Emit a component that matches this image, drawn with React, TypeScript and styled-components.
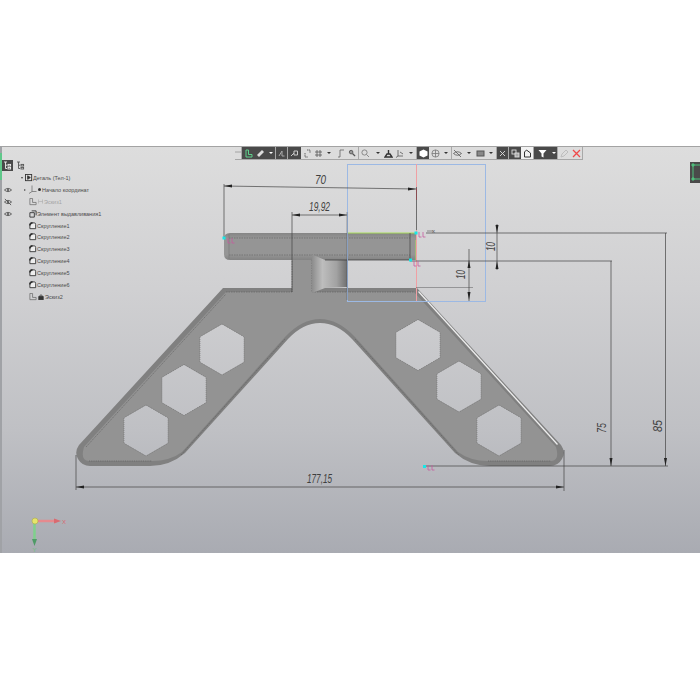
import React from "react";
import styled, { createGlobalStyle } from "styled-components";

const GlobalStyle = createGlobalStyle`
  html, body { margin: 0; padding: 0; background: #fff; }
  body { font-family: "Liberation Sans", "Noto Sans", sans-serif; }
`;

const Page = styled.div`
  width: 700px;
  height: 700px;
  padding-top: 146px;
  box-sizing: border-box;
  background: #fff;
  overflow: hidden;
`;
const Viewport = styled.div`
  position: relative;
  height: 407px;
  box-sizing: border-box;
  border-top: 1px solid #a3a3a3;
  border-left: 2px solid #a0a2a6;
  background: linear-gradient(180deg, #dddddd 0%, #d0d0d2 35%, #bfc0c4 70%, #a9abb2 100%);
`;
const GreenStrip = styled.div`
  position: absolute;
  left: -2px;
  top: 6px;
  width: 2px;
  height: 27px;
  background: #5fc88a;
`;
const Canvas = styled.svg`
  display: block;
  width: 698px;
  height: 406px;
`;

/* top toolbar */
const Toolbar = styled.div`
  position: absolute;
  left: 233px;
  top: 0;
  height: 12px;
  display: flex;
  align-items: stretch;
  background: #dcdcdc;
  border-bottom: 1px solid #a6a6a6;
`;
const Btn = styled.div<{ $w: number; $dark?: boolean; $white?: boolean; $sep?: boolean }>`
  width: ${(p) => p.$w}px;
  display: flex;
  align-items: center;
  justify-content: center;
  flex: none;
  background: ${(p) => (p.$dark ? "#4a4a4a" : p.$white ? "#f2f2f2" : "transparent")};
  border-right: ${(p) => (p.$sep ? "1px solid #a8a8a8" : "none")};
  box-sizing: border-box;
  color: ${(p) => (p.$dark ? "#e8e8e8" : "#555")};
`;
const Caret = styled.span<{ $light?: boolean }>`
  width: 0;
  height: 0;
  border-left: 2px solid transparent;
  border-right: 2px solid transparent;
  border-top: 2px solid ${(p) => (p.$light ? "#fff" : "#333")};
`;

/* model tree */
const Tree = styled.div`
  position: absolute;
  left: -2px;
  top: 13px;
  width: 120px;
  color: #4c4c4c;
`;
const TreeHead = styled.div`
  display: flex;
  gap: 2px;
  padding-left: 2px;
  height: 11px;
  margin-bottom: 1px;
`;
const HeadBtn = styled.div<{ $on?: boolean }>`
  width: 11px;
  height: 11px;
  display: flex;
  align-items: center;
  justify-content: center;
  background: ${(p) => (p.$on ? "#4a4a4a" : "transparent")};
  color: ${(p) => (p.$on ? "#eee" : "#555")};
`;
const Row = styled.div<{ $faded?: boolean }>`
  display: flex;
  align-items: center;
  height: 11.9px;
  font-size: 5.5px;
  white-space: nowrap;
  color: ${(p) => (p.$faded ? "#a4a4a4" : "#4c4c4c")};
`;
const EyeSlot = styled.div`
  width: 17px;
  padding-left: 4px;
  box-sizing: border-box;
  display: flex;
  align-items: center;
  flex: none;
`;
const Twist = styled.div<{ $w: number }>`
  width: ${(p) => p.$w}px;
  display: flex;
  justify-content: flex-end;
  padding-right: 2px;
  box-sizing: border-box;
  flex: none;
`;
const TwistDown = styled.span`
  width: 0;
  height: 0;
  border-left: 1.5px solid transparent;
  border-right: 1.5px solid transparent;
  border-top: 2.5px solid #444;
`;
const TwistRight = styled.span`
  width: 0;
  height: 0;
  border-top: 1.5px solid transparent;
  border-bottom: 1.5px solid transparent;
  border-left: 2.5px solid #555;
`;
const Badge = styled.span`
  display: flex;
  align-items: center;
  margin: 0 1px 0 1px;
`;
const Corner = styled.div`
  position: absolute;
  right: 0;
  top: 15px;
  width: 10px;
  height: 21px;
  background: #4a4a4a;
  overflow: hidden;
`;

type G = React.SVGProps<SVGSVGElement>;
const I = ({ children, s = 9, ...r }: G & { s?: number }) => (
  <svg width={s} height={s} viewBox="0 0 9 9" fill="none" stroke="currentColor" strokeWidth="1" {...r}>
    {children}
  </svg>
);

const Eye = ({ off }: { off?: boolean }) => (
  <I s={8} stroke="#555">
    <path d="M.5 4.5Q4.5 .8 8.5 4.5Q4.5 8.2 .5 4.5Z" />
    <circle cx="4.5" cy="4.5" r="1.2" fill="#555" stroke="none" />
    {off && <path d="M1 1L8 8" />}
  </I>
);
const SketchIcon = () => (
  <I s={8} stroke="#666" strokeWidth=".8">
    <path d="M1 .5V7.5H8V5H4V.5Z" />
  </I>
);
const FilletIcon = () => (
  <I s={8} stroke="#333" strokeWidth="1">
    <path d="M1 7.5V3Q1 1 3.5 1H6Q7.5 1 7.5 3V7.5Z" fill="#eee" />
    <path d="M1 4Q1 1 4 1" strokeWidth="1.8" />
  </I>
);
const ExtrudeIcon = () => (
  <I s={8} stroke="#333" strokeWidth="1">
    <path d="M3 1H8V6M1 3H6V8H1Z" />
  </I>
);
const PartIcon = () => (
  <I s={8} stroke="#333" strokeWidth="1">
    <rect x=".5" y=".5" width="7" height="7" fill="#ddd" />
    <path d="M3 2V6L6 4Z" fill="#333" />
  </I>
);
const AxesIcon = () => (
  <I s={9} stroke="#666" strokeWidth=".7">
    <path d="M4 .5V6.5H8.5M4 6.5L1 8.5" />
  </I>
);
const LockIcon = () => (
  <I s={6} viewBox="0 0 6 6" stroke="#333" strokeWidth=".8">
    <rect x=".8" y="2.6" width="4.4" height="3" fill="#333" />
    <path d="M1.8 2.6V1.6Q3 0 4.2 1.6V2.6" />
  </I>
);
const Dot = styled.span`
  width: 3px;
  height: 3px;
  border-radius: 50%;
  background: #333;
`;
const TreeIcon = () => (
  <I s={9} strokeWidth=".9">
    <path d="M1 1H4M2.5 1V7.5H4M2.5 4.2H4" />
    <rect x="5" y="3.4" width="2.6" height="1.6" />
    <rect x="5" y="6.4" width="2.6" height="1.6" />
  </I>
);

const tools: { w: number; dark?: boolean; white?: boolean; sep?: boolean; icon?: React.ReactNode }[] = [
  { w: 7, sep: true, icon: <I s={6}><path d="M0 3H9" stroke="#888" /></I> },
  { w: 12, dark: true, icon: <I stroke="#5fd08c"><path d="M2 1V8H8V5.5H4.5V1Z" /></I> },
  { w: 13, dark: true, icon: <I stroke="none" fill="#ddd"><path d="M1 6L6 1L8 3L3 8Z" /></I> },
  { w: 9, dark: true, sep: true, icon: <Caret $light /> },
  { w: 12, dark: true, sep: true, icon: <I stroke="#aaa"><path d="M2 7L5 2V7H7.5" /></I> },
  { w: 13, dark: true, icon: <I stroke="#ccc"><path d="M1 7L4 4M4 2H7.5V6H4Z" /></I> },
  { w: 12, icon: <I strokeWidth=".9"><path d="M2 4V8H5M4 1H7V4" strokeDasharray="1.5 .6" /></I> },
  { w: 10, icon: <I strokeWidth=".8"><path d="M1 3H8M1 6H8M3 1V8M6 1V8" /></I> },
  { w: 11, icon: <Caret /> },
  { w: 12, icon: <I strokeWidth=".7"><path d="M2 8H4V1H8" /></I> },
  { w: 13, sep: true, icon: <I s={8}><circle cx="3.5" cy="3.5" r="2" fill="#999" /><path d="M5 5L8 8" strokeWidth="1.5" /></I> },
  { w: 13, icon: <I strokeWidth=".8" stroke="#777"><circle cx="3.5" cy="3.5" r="2.6" /><path d="M5.5 5.5L8 8" /></I> },
  { w: 11, icon: <Caret /> },
  { w: 11, icon: <I stroke="#333"><path d="M1 8H8L6 5H3ZM4.5 1V5" strokeWidth="1.4" /></I> },
  { w: 11, icon: <I strokeWidth=".8"><path d="M3 1V7H8M3 7L1 8.5M5 3L8 5" /></I> },
  { w: 12, sep: true, icon: <Caret /> },
  { w: 12, dark: true, icon: <I stroke="none" fill="#fff"><path d="M4.5 .5L8.5 2.5V6.5L4.5 8.5L.5 6.5V2.5Z" /></I> },
  { w: 12, icon: <I strokeWidth=".8" stroke="#777"><circle cx="4.5" cy="4.5" r="3.6" /><path d="M1 4.5H8M4.5 1V8" /></I> },
  { w: 11, sep: true, icon: <Caret /> },
  { w: 11, icon: <I strokeWidth=".8"><path d="M.5 4.5Q4.5 1 8.5 4.5Q4.5 8 .5 4.5ZM1 1L8 8" /></I> },
  { w: 11, icon: <Caret /> },
  { w: 12, icon: <I strokeWidth="1"><rect x="1" y="2" width="7" height="5" fill="#888" /></I> },
  { w: 11, sep: true, icon: <Caret /> },
  { w: 12, dark: true, sep: true, icon: <I stroke="#ddd" strokeWidth=".9"><path d="M2 2L7 7M7 2L2 7" /></I> },
  { w: 12, dark: true, icon: <I stroke="#ddd" strokeWidth=".9"><rect x="1" y="1" width="4" height="4" /><rect x="4" y="4" width="4" height="4" fill="#aaa" /></I> },
  { w: 13, white: true, sep: true, icon: <I stroke="#333"><path d="M1.5 8H7.5V4L3.5 1L1.5 3Z" /></I> },
  { w: 16, dark: true, icon: <I stroke="none" fill="#fff"><path d="M.5 1H8.5L5.5 4.5V8.5L3.5 7.5V4.5Z" /></I> },
  { w: 8, dark: true, sep: true, icon: <Caret $light /> },
  { w: 12, icon: <I stroke="#bdbdbd"><path d="M1 8L2 5L6 1L8 3L4 7Z" /></I> },
  { w: 13, sep: true, icon: <I stroke="#f0494a" strokeWidth="1.3"><path d="M1 1L8 8M8 1L1 8" /></I> },
];

const features = ["Скругление1", "Скругление2", "Скругление3", "Скругление4", "Скругление5", "Скругление6"];

const hex = (cx: number, cy: number) =>
  `M${cx} ${cy - 25.5}L${cx + 22} ${cy - 12.7}V${cy + 12.7}L${cx} ${cy + 25.5}L${cx - 22} ${cy + 12.7}V${cy - 12.7}Z`;
const holes = [
  hex(222, 349.5),
  hex(184, 390),
  hex(146, 430.5),
  hex(418, 345),
  hex(459, 386.5),
  hex(499, 430.5),
].join("");

const outer =
  "M223 288H292V262H312V288H417L561 445Q566 452 562 459Q558 466 550 466H490Q470 466 455 453L352 339Q337 323 320 323Q303 323 288 339L185 453Q170 466 150 466H90Q82 466 78 459Q74 452 79 445Z";
const face =
  "M226 292H292V258H312V292H414L556 447Q560 461 551 461H488Q470 461 458 452L355 337Q338 319 320 319Q302 319 285 337L182 452Q170 461 152 461H89Q80 461 84 447Z";

const Arrow = ({ x, y, dir }: { x: number; y: number; dir: "l" | "r" | "u" | "d" }) => {
  const p = {
    l: `${x},${y} ${x + 8},${y - 1.5} ${x + 8},${y + 1.5}`,
    r: `${x},${y} ${x - 8},${y - 1.5} ${x - 8},${y + 1.5}`,
    u: `${x},${y} ${x - 1.5},${y + 8} ${x + 1.5},${y + 8}`,
    d: `${x},${y} ${x - 1.5},${y - 8} ${x + 1.5},${y - 8}`,
  }[dir];
  return <polygon points={p} fill="#222" />;
};

const Tick = ({ x, y }: { x: number; y: number }) => (
  <path
    d={`M${x} ${y}V${y + 5}H${x + 2.5}M${x + 4} ${y}V${y + 5}H${x + 6.5}`}
    stroke="#c65aa0"
    strokeWidth=".8"
    fill="none"
  />
);

const DimText = styled.text`
  font-family: "Liberation Sans", sans-serif;
  font-style: italic;
  font-size: 12px;
  fill: #3f3f3f;
`;
const AxisLabel = styled.text<{ $c: string }>`
  font-family: "Liberation Sans", sans-serif;
  font-size: 6px;
  fill: ${(p) => p.$c};
`;

export default function App() {
  return (
    <Page>
      <GlobalStyle />
      <Viewport>
        <GreenStrip />
        <Canvas viewBox="2 147 698 406">
          <defs>
            <linearGradient id="recess" x1="0" x2="1" y1="0" y2="0">
              <stop offset="0" stopColor="#8c8c8c" />
              <stop offset=".3" stopColor="#bdbdbd" />
              <stop offset=".7" stopColor="#a2a2a2" />
              <stop offset="1" stopColor="#707070" />
            </linearGradient>
            <linearGradient id="bar" x1="0" x2="0" y1="0" y2="1">
              <stop offset="0" stopColor="#858585" />
              <stop offset=".2" stopColor="#959595" />
              <stop offset=".8" stopColor="#959595" />
              <stop offset="1" stopColor="#838383" />
            </linearGradient>
          </defs>

          {/* bracket body */}
          <path d={outer + holes} fillRule="evenodd" fill="#808080" />
          <path d={face + holes} fillRule="evenodd" fill="#939393" />
          <path d={holes} fill="none" stroke="#666" strokeWidth=".5" strokeDasharray="1 1" />
          <path d="M418.5 291.5L557.5 444.5" stroke="#ededed" strokeWidth="1.3" fill="none" />
          <path d="M86 447L226 294M181 455L285 339M355 339L459 455" stroke="#555" strokeWidth=".5" strokeDasharray="1.5 .8" fill="none" />
          <path d="M89 461H152M488 461H551" stroke="#555" strokeWidth=".6" strokeDasharray="1 .8" />
          <path d="M226 292H292M312 292H414" stroke="#555" strokeWidth=".5" strokeDasharray="1.5 1" />
          <path d="M292 261V292M312 255V292" stroke="#555" strokeWidth=".5" strokeDasharray="1.5 1" />

          {/* top bar */}
          <path d="M230 233H416V260H230Q224 260 224 254V239Q224 233 230 233Z" fill="url(#bar)" />
          <path d="M229 238H410M229 255H410" stroke="#555" strokeWidth=".5" strokeDasharray="1.5 1" />
          <path d="M229 234V259" stroke="#7a7a7a" strokeWidth=".7" />
          <path d="M347 233H416" stroke="#a9dc5c" strokeWidth="1" />
          <path d="M416 240V260" stroke="#a9dc5c" strokeWidth="1" />
          <path d="M410 233V260" stroke="#444" strokeWidth=".7" />

          {/* underside of the bar beside the stem */}
          <path d="M312 254.5L325 260H347V287L325 288L312 293Z" fill="url(#recess)" />
          <path d="M325 260H410" stroke="#333" strokeWidth=".7" />

          {/* sketch frame */}
          <rect x="347.5" y="164.5" width="138" height="137" fill="none" stroke="#9cb9e4" strokeWidth="1" />
          <path d="M416.5 164V301" stroke="#f0a0a4" strokeWidth="1" />
          <path d="M416.5 187V230" stroke="#6e6e6e" strokeWidth="1" />
          <path d="M416.5 188V200" stroke="#8a4b50" strokeWidth="1" />

          {/* dimensions */}
          <g stroke="#444" strokeWidth=".7" fill="none">
            <path d="M224 184V237M224 186L416 189" />
            <path d="M292 212V292M292 215H347" />
            <path d="M347 212V300" strokeOpacity=".6" />
            <path d="M426 233H667M410 261H612" />
            <path d="M416 287.5H473" strokeOpacity=".6" />
            <path d="M469 249V301M497 224V270" />
            <path d="M611 261V466M665.5 233V466" />
            <path d="M424 466H668" />
            <path d="M76 455V490M564 450V491M76 487H564" />
          </g>
          <Arrow x={224} y={186} dir="l" />
          <Arrow x={416} y={189} dir="r" />
          <Arrow x={292} y={215} dir="l" />
          <Arrow x={347} y={215} dir="r" />
          <Arrow x={469} y={260} dir="u" />
          <Arrow x={469} y={300} dir="d" />
          <Arrow x={497} y={233} dir="d" />
          <Arrow x={497} y={261} dir="u" />
          <Arrow x={611} y={466} dir="d" />
          <Arrow x={665.5} y={466} dir="d" />
          <Arrow x={76} y={487} dir="l" />
          <Arrow x={564} y={487} dir="r" />
          <DimText x={315} y={184} textLength={11} lengthAdjust="spacingAndGlyphs">70</DimText>
          <DimText x={309} y={211} textLength={21} lengthAdjust="spacingAndGlyphs">19,92</DimText>
          <DimText transform="translate(465 279) rotate(-90)" textLength={9} lengthAdjust="spacingAndGlyphs">10</DimText>
          <DimText transform="translate(495 251) rotate(-90)" textLength={9} lengthAdjust="spacingAndGlyphs">10</DimText>
          <DimText transform="translate(606 433) rotate(-90)" textLength={10} lengthAdjust="spacingAndGlyphs">75</DimText>
          <DimText transform="translate(662 432) rotate(-90)" textLength={12} lengthAdjust="spacingAndGlyphs">85</DimText>
          <DimText x={307} y={483} textLength={25} lengthAdjust="spacingAndGlyphs">177,15</DimText>

          {/* sketch markers */}
          <g fill="#19e6e6">
            <rect x="222.5" y="236.5" width="3" height="3" />
            <rect x="414.5" y="231.5" width="3" height="3" />
            <rect x="409" y="258.5" width="3" height="3" />
            <rect x="423" y="465" width="3" height="3" />
          </g>
          <Tick x={228} y={238} />
          <Tick x={419} y={232} />
          <Tick x={414} y={261} />
          <Tick x={428} y={465} />
          <path d="M427 231H433" stroke="#555" strokeWidth=".6" />
          <AxisLabel $c="#555" x={432} y={233}>x</AxisLabel>

          {/* origin triad */}
          <path d="M34 521H57" stroke="#e58a8e" strokeWidth="2.5" />
          <polygon points="61,521 54,518.5 54,523.5" fill="#d96a70" />
          <AxisLabel $c="#d96a70" x={62} y={524}>X</AxisLabel>
          <path d="M34.5 521V542" stroke="#7fd08c" strokeWidth="2.5" />
          <polygon points="34.5,546 32,539 37,539" fill="#4f9a66" />
          <AxisLabel $c="#6fbf80" x={32.5} y={552}>Y</AxisLabel>
          <circle cx="35" cy="521" r="3" fill="#e6e56a" stroke="#a8a850" strokeWidth=".6" />
        </Canvas>

        <Toolbar>
          {tools.map((t, i) => (
            <Btn key={i} $w={t.w} $dark={t.dark} $white={t.white} $sep={t.sep}>
              {t.icon}
            </Btn>
          ))}
        </Toolbar>

        <Tree>
          <TreeHead>
            <HeadBtn $on>
              <TreeIcon />
            </HeadBtn>
            <HeadBtn>
              <TreeIcon />
            </HeadBtn>
          </TreeHead>
          <Row>
            <EyeSlot />
            <Twist $w={8}>
              <TwistDown />
            </Twist>
            <PartIcon />
            Деталь (Тел-1)
          </Row>
          <Row>
            <EyeSlot>
              <Eye />
            </EyeSlot>
            <Twist $w={11}>
              <TwistRight />
            </Twist>
            <AxesIcon />
            <Badge>
              <Dot />
            </Badge>
            Начало координат
          </Row>
          <Row $faded>
            <EyeSlot>
              <Eye off />
            </EyeSlot>
            <Twist $w={12} />
            <SketchIcon />
            <Badge>
              <I s={5} viewBox="0 0 5 5" stroke="#aaa" strokeWidth=".6">
                <path d="M.5 .5V4.5M4.5 .5V4.5M.5 2.5H4.5" />
              </I>
            </Badge>
            Эскиз1
          </Row>
          <Row>
            <EyeSlot>
              <Eye />
            </EyeSlot>
            <Twist $w={12} />
            <ExtrudeIcon />
            Элемент выдавливания1
          </Row>
          {features.map((f) => (
            <Row key={f}>
              <EyeSlot />
              <Twist $w={12} />
              <FilletIcon />
              {f}
            </Row>
          ))}
          <Row>
            <EyeSlot />
            <Twist $w={12} />
            <SketchIcon />
            <Badge>
              <LockIcon />
            </Badge>
            Эскиз2
          </Row>
        </Tree>

        <Corner>
          <svg width="10" height="21" viewBox="0 0 10 21" fill="none" stroke="#4fc07c" strokeWidth="1">
            <rect x="3" y="3" width="10" height="14" />
            <circle cx="3" cy="3" r="1.2" fill="#4fc07c" />
            <circle cx="3" cy="17" r="1.2" fill="#4fc07c" />
          </svg>
        </Corner>
      </Viewport>
    </Page>
  );
}
